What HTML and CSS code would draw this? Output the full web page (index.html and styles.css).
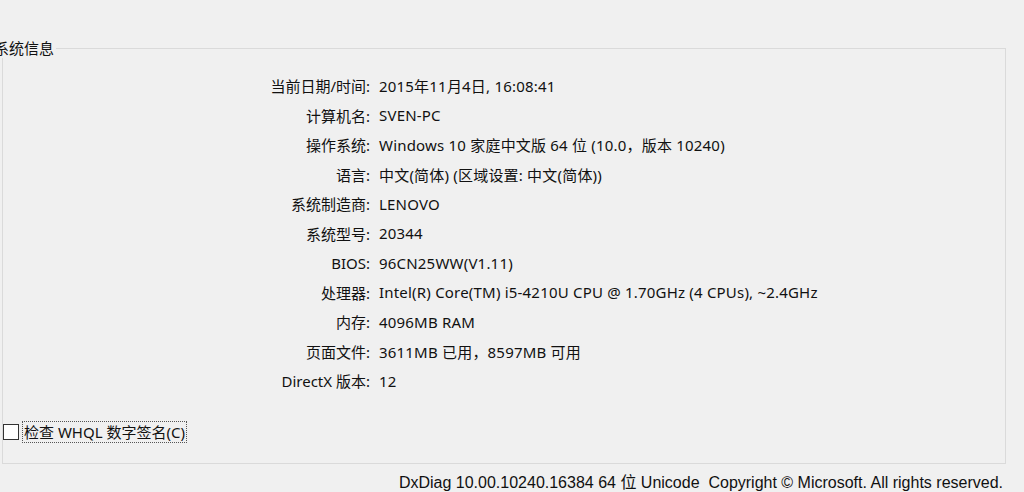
FILE: index.html
```html
<!DOCTYPE html>
<html lang="zh-CN">
<head>
    <meta charset="UTF-8">
    <title>DirectX 诊断工具 - 系统</title>
    <link rel="stylesheet" href="styles.css">
</head>
<body>
    <div class="page">
        <fieldset class="group">
            <legend>系统信息</legend>

            <div class="info">
                <span class="label">当前日期/时间:</span><span class="value">2015年11月4日, 16:08:41</span>
                <span class="label">计算机名:</span><span class="value">SVEN-PC</span>
                <span class="label">操作系统:</span><span class="value">Windows 10 家庭中文版 64 位 (10.0，版本 10240)</span>
                <span class="label">语言:</span><span class="value">中文(简体) (区域设置: 中文(简体))</span>
                <span class="label">系统制造商:</span><span class="value">LENOVO</span>
                <span class="label">系统型号:</span><span class="value">20344</span>
                <span class="label">BIOS:</span><span class="value">96CN25WW(V1.11)</span>
                <span class="label">处理器:</span><span class="value">Intel(R) Core(TM) i5-4210U CPU @ 1.70GHz (4 CPUs), ~2.4GHz</span>
                <span class="label">内存:</span><span class="value">4096MB RAM</span>
                <span class="label">页面文件:</span><span class="value">3611MB 已用，8597MB 可用</span>
                <span class="label">DirectX 版本:</span><span class="value">12</span>
            </div>

            <label class="check">
                <input type="checkbox">
                <span class="check-text">检查 WHQL 数字签名(C)</span>
            </label>
        </fieldset>

        <div class="footer">DxDiag 10.00.10240.16384 64 位 Unicode&nbsp; Copyright © Microsoft. All rights reserved.</div>
    </div>
</body>
</html>
```

FILE: styles.css
```css
* {
    margin: 0;
    padding: 0;
    box-sizing: border-box;
}

html, body {
    height: 100%;
    overflow: hidden;
}

body {
    font-family: "Noto Sans", "Noto Sans CJK SC", sans-serif;
    font-size: 15px;
    color: #111;
    background: #f0f0f0;
}

.page {
    padding-top: 38px;
}

.group {
    margin-left: 2px;
    width: 1004px;
    height: 426px;
    border: 1px solid #dadada;
    padding: 0;
}

.group legend {
    margin-left: -9px;
    padding-right: 2px;
    line-height: 20px;
}

.info {
    display: grid;
    grid-template-columns: 367px auto;
    column-gap: 9px;
    grid-auto-rows: 29.5px;
    align-items: center;
    margin-top: 13px;
}

.label {
    text-align: right;
    white-space: nowrap;
}

.value {
    white-space: nowrap;
    letter-spacing: 0.2px;
}

.check {
    display: flex;
    align-items: center;
    gap: 3px;
    margin-top: 25px;
    margin-left: 0;
}

.check input {
    appearance: none;
    width: 16px;
    height: 16px;
    border: 1px solid #333;
    background: #fff;
    margin: 0;
}

.check-text {
    border: 1px dotted #555;
    padding: 0 1px;
    line-height: 20px;
}

.footer {
    width: 1003px;
    text-align: right;
    font-family: "Liberation Sans", "Noto Sans CJK SC", sans-serif;
    font-size: 16px;
    line-height: 20px;
    margin-top: 9px;
}
```
